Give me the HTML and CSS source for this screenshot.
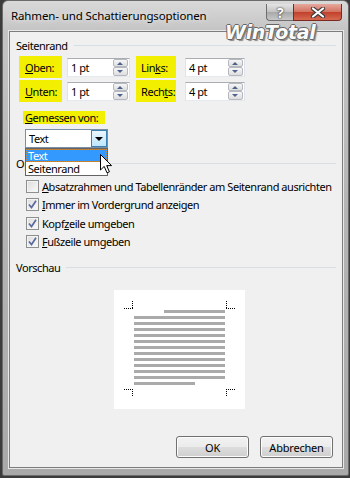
FILE: index.html
```html
<!DOCTYPE html>
<html lang="de">
<head>
<meta charset="UTF-8" />
<title>Rahmen- und Schattierungsoptionen</title>
<link rel="stylesheet" href="styles.css">
</head>
<body>
<div class="window">
  <div class="titlebar">
    <span class="title">Rahmen- und Schattierungsoptionen</span>
    <span class="cap-btn help">?</span>
    <span class="cap-btn close">
      <svg width="16" height="11" viewBox="0 0 16 11"><path d="M3 1.5 L13 9.5 M13 1.5 L3 9.5" stroke="#3b3b3b" stroke-width="4.2" stroke-linecap="round"/><path d="M3 1.5 L13 9.5 M13 1.5 L3 9.5" stroke="#fff" stroke-width="2.2" stroke-linecap="round"/></svg>
    </span>
  </div>
  <div class="watermark">WinTotal</div>

  <div class="client">
    <div class="group-head"><span>Seitenrand</span><i></i></div>

    <div class="margins">
      <label class="hl"><u>O</u>ben:</label>
      <div class="spin"><span class="val">1 pt</span><span class="arrows"><i class="up"></i><i class="down"></i></span></div>
      <label class="hl pad5">Lin<u>k</u>s:</label>
      <div class="spin"><span class="val">4 pt</span><span class="arrows"><i class="up"></i><i class="down"></i></span></div>

      <label class="hl"><u>U</u>nten:</label>
      <div class="spin"><span class="val">1 pt</span><span class="arrows"><i class="up"></i><i class="down"></i></span></div>
      <label class="hl pad5">Rech<u>t</u>s:</label>
      <div class="spin"><span class="val">4 pt</span><span class="arrows"><i class="up"></i><i class="down"></i></span></div>
    </div>

    <div class="measured"><u>G</u>emessen von:</div>
    <div class="combo">
      <div class="combo-box">
        <span class="combo-val">Text</span>
        <span class="combo-btn"><i></i></span>
      </div>
      <ul class="combo-list">
        <li class="sel">Text</li>
        <li>Seitenrand</li>
      </ul>
      <svg class="cursor" width="13" height="20" viewBox="0 0 13 20"><path d="M0.5 0.5 L0.5 16 L4.2 12.4 L7 18.8 L9.4 17.8 L6.7 11.6 L11.6 11.6 Z" fill="#fff" stroke="#000" stroke-width="1" stroke-linejoin="round"/></svg>
    </div>

    <div class="group-head opts"><span>Optionen</span><i></i></div>

    <div class="checks">
      <div class="chk"><span class="box"></span><span><u>A</u>bsatzrahmen und Tabellenränder am Seitenrand ausrichten</span></div>
      <div class="chk"><span class="box on"><svg width="9" height="9" viewBox="0 0 9 9"><path d="M1 4.5 L3.5 7.5 L8 0.8" fill="none" stroke="#5a6a9e" stroke-width="1.7"/></svg></span><span><u>I</u>mmer im Vordergrund anzeigen</span></div>
      <div class="chk"><span class="box on"><svg width="9" height="9" viewBox="0 0 9 9"><path d="M1 4.5 L3.5 7.5 L8 0.8" fill="none" stroke="#5a6a9e" stroke-width="1.7"/></svg></span><span>Kopf<u>z</u>eile umgeben</span></div>
      <div class="chk"><span class="box on"><svg width="9" height="9" viewBox="0 0 9 9"><path d="M1 4.5 L3.5 7.5 L8 0.8" fill="none" stroke="#5a6a9e" stroke-width="1.7"/></svg></span><span><u>F</u>ußzeile umgeben</span></div>
    </div>

    <div class="group-head preview-head"><span>Vorschau</span><i></i></div>

    <div class="preview">
      <svg width="131" height="119" viewBox="0 0 131 119">
        <g stroke="#000" stroke-width="1" stroke-dasharray="1 1" fill="none">
          <path d="M10 18.5 H19 M18.5 11 V19"/>
          <path d="M112 18.5 H121 M112.5 11 V19"/>
          <path d="M10 99.5 H19 M18.5 99 V107"/>
          <path d="M112 99.5 H121 M112.5 99 V107"/>
        </g>
        <g fill="#aaaaaa">
          <rect x="50" y="20" width="61" height="3"/>
          <rect x="20" y="26" width="91" height="3"/>
          <rect x="20" y="32" width="91" height="3"/>
          <rect x="20" y="38" width="91" height="3"/>
          <rect x="20" y="44" width="91" height="3"/>
          <rect x="20" y="50" width="91" height="3"/>
          <rect x="20" y="56" width="91" height="3"/>
          <rect x="20" y="62" width="91" height="3"/>
          <rect x="20" y="68" width="91" height="3"/>
          <rect x="20" y="74" width="91" height="3"/>
          <rect x="20" y="80" width="91" height="3"/>
          <rect x="20" y="86" width="91" height="3"/>
          <rect x="20" y="92" width="61" height="3"/>
        </g>
      </svg>
    </div>

    <div class="buttons">
      <button class="btn">OK</button>
      <button class="btn">Abbrechen</button>
    </div>
  </div>
</div>
</body>
</html>
```

FILE: styles.css
```css
* {
  box-sizing: border-box;
}
body {
  margin: 0;
  width: 350px;
  height: 478px;
  overflow: hidden;
  background: #3c3c3c;
  font-family: 'Noto Sans', 'DejaVu Sans', sans-serif;
  font-size: 11px;
  letter-spacing: -0.45px;
  color: #000;
  white-space: nowrap;
}
.window {
  position: relative;
  margin-left: 2px;
  width: 347px;
  height: 476px;
  border: 1px solid #6b6b6b;
  border-radius: 6px 6px 2px 2px;
  background: linear-gradient(to bottom, #d9d9d9 0px, #c4c4c4 30px, #b5b5b5 200px, #a9a9a9 100%);
  padding: 0 5px 7px 6px;
  display: flex;
  flex-direction: column;
}
.titlebar {
  height: 30px;
  display: flex;
  align-items: flex-start;
}
.title {
  padding: 7px 0 0 2px;
  font-size: 11.5px;
  letter-spacing: -0.12px;
  color: #000;
  text-shadow: 0 0 6px rgba(255,255,255,0.9);
}
.cap-btn {
  height: 17px;
  margin-top: 3px;
  display: flex;
  align-items: center;
  justify-content: center;
  border: 1px solid #6e6e6e;
  border-top: none;
}
.help {
  margin-left: auto;
  width: 27px;
  border-radius: 0 0 0 4px;
  border-right: none;
  background: linear-gradient(to bottom, #e4e4e4, #c2c2c2 50%, #a8a8a8 51%, #c8c8c8);
  color: #fff;
  font-weight: bold;
  font-size: 14px;
  text-shadow: 0 0 1px #333, 0 0 2px #333;
}
.close {
  width: 49px;
  margin-right: 1px;
  border-radius: 0 0 4px 0;
  border-color: #7a2a20;
  background: linear-gradient(to bottom, #e6a99e, #d3705f 50%, #c0402c 51%, #d76a50);
}
.watermark {
  position: absolute;
  left: 222px;
  top: 20px;
  z-index: 5;
  font-family: 'DejaVu Sans', sans-serif;
  font-weight: bold;
  font-style: italic;
  font-size: 19px;
  letter-spacing: -0.3px;
  color: #fafafa;
  text-shadow: -1px 0 #666, 1px 0 #666, 0 -1px #666, 0 1px #666, 2px 2px 1px #888;
}
.client {
  flex: 1;
  display: flex;
  flex-direction: column;
  background: #f0f0f0;
  border: 1px solid #7d7d7d;
  box-shadow: 0 0 0 1px #e8e8e8;
  position: relative;
}
.group-head {
  display: flex;
  align-items: center;
  height: 15px;
  margin-top: 6px;
  padding: 0 6px;
}
.group-head i {
  flex: 1;
  height: 1px;
  margin-left: 6px;
  background: #d5dfe5;
}
.margins {
  display: grid;
  grid-template-columns: 43px 63px 41px 64px;
  grid-template-rows: 22px 22px;
  column-gap: 5px;
  row-gap: 2px;
  margin: 3px 0 0 9px;
  align-items: center;
}
.margins .spin:nth-child(4n+4) {
  margin-left: 4px;
}
.margins label:nth-child(4n+3) {
  margin-left: 1px;
}
.hl {
  background: #f2f000;
  height: 22px;
  display: flex;
  align-items: center;
  padding-left: 6px;
}
.hl.pad5 {
  padding-left: 5px;
}
.spin {
  height: 19px;
  border: 1px solid #abadb3;
  border-left-color: #e2e3ea;
  border-right-color: #e2e3ea;
  border-bottom-color: #e3e9ef;
  background: #fff;
  display: flex;
  align-items: center;
}
.val {
  flex: 1;
  padding-left: 3px;
}
.arrows {
  width: 15px;
  height: 17px;
  display: flex;
  flex-direction: column;
  margin-right: 1px;
}
.arrows i {
  flex: 1;
  border: 1px solid #b5b8bf;
  border-radius: 2px;
  background: linear-gradient(to bottom, #f6f6f6, #dedede);
  position: relative;
}
.arrows i::after {
  content: '';
  position: absolute;
  left: 3px;
  top: 2px;
  border-left: 3.5px solid transparent;
  border-right: 3.5px solid transparent;
}
.arrows .up::after {
  border-bottom: 3px solid #4c618c;
}
.arrows .down::after {
  border-top: 3px solid #4c618c;
}
.measured {
  margin: 9px 0 0 13px;
  width: 82px;
  height: 13px;
  line-height: 13px;
  padding-left: 2px;
  background: #f2f000;
}
.combo {
  position: relative;
  margin: 5px 0 0 15px;
  width: 83px;
}
.combo-box {
  height: 19px;
  border: 1px solid #7a8ea8;
  background: #fff;
  display: flex;
  align-items: center;
}
.combo-val {
  flex: 1;
  padding-left: 3px;
}
.combo-btn {
  width: 16px;
  height: 17px;
  border: 1px solid #3c7fb1;
  background: linear-gradient(to bottom, #eaf6fd, #bee6fd);
  display: flex;
  align-items: center;
  justify-content: center;
}
.combo-btn i {
  border-left: 4px solid transparent;
  border-right: 4px solid transparent;
  border-top: 4px solid #000;
}
.combo-list {
  position: absolute;
  left: 0;
  top: 19px;
  width: 83px;
  margin: 0;
  padding: 0;
  list-style: none;
  background: #fff;
  border: 1px solid #646464;
  z-index: 2;
}
.combo-list li {
  height: 13px;
  line-height: 13px;
  padding-left: 2px;
}
.combo-list li.sel {
  background: #3399ff;
  color: #fff;
  outline: 1px dotted #c88a3a;
  outline-offset: -1px;
}
.cursor {
  position: absolute;
  left: 75px;
  top: 25px;
  z-index: 3;
}
.group-head.opts {
  margin-top: 8px;
}
.checks {
  margin: 6px 0 0 16px;
}
.chk {
  height: 18.5px;
  display: flex;
  align-items: center;
}
.box {
  flex-shrink: 0;
  width: 13px;
  height: 13px;
  border: 1px solid #8e8f8f;
  background: linear-gradient(135deg, #dcdcdc, #fbfbfb);
  box-shadow: inset 0 0 0 1px #f4f4f4;
  margin-right: 3px;
  display: flex;
  align-items: center;
  justify-content: center;
}
.group-head.preview-head {
  margin-top: 9px;
}
.preview {
  margin: 15px 0 0 104px;
  width: 131px;
  height: 119px;
  background: #fff;
}
.preview svg {
  display: block;
}
.buttons {
  margin-top: auto;
  display: flex;
  justify-content: flex-end;
  gap: 11px;
  padding: 0 9px 9px 0;
}
.btn {
  width: 73px;
  height: 22px;
  font-family: inherit;
  font-size: 11px;
  letter-spacing: -0.2px;
  color: #000;
  border: 1px solid #707070;
  border-radius: 3px;
  background: linear-gradient(to bottom, #f2f2f2, #ebebeb 50%, #dddddd 51%, #cfcfcf);
  box-shadow: inset 0 0 0 1px #fcfcfc;
  padding: 0;
}
```
